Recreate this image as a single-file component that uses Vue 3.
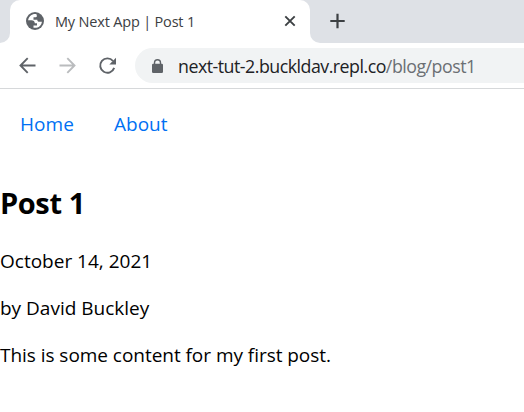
<script setup>
const navLinks = ['Home', 'About']
const paragraphs = [
  { text: 'October 14, 2021', name: 'date' },
  { text: 'by David Buckley', name: 'author' },
  { text: 'This is some content for my first post.', name: 'content' },
]
</script>

<template>
  <div class="window">
    <div class="tabs">
      <div class="before"></div>
      <div class="tab">
        <svg class="globe" width="18" height="18" viewBox="0 0 18 18">
          <circle cx="9" cy="9" r="9" fill="#5f6368" />
          <path fill="#fff" d="M10.500 2.200C6.300 1.500 2.700 4.200 2.100 8.300H5.500c2 0 3.300 1 3.300 2.900H11v2.200H7.500v2.300c4.200.9 8-1.900 8.400-6h-2.600c-1.300 0-2-.6-2-2H7.500V5.300h2.200c.8 0 1.200-.5 1.200-1.200z" />
        </svg>
        <span class="tab-title"><span>My Next App | Post 1</span></span>
        <svg class="close" width="12" height="12" viewBox="0 0 12 12"><path d="M1.300 1.300 10.700 10.700M10.700 1.300 1.300 10.700" stroke="#3c4043" stroke-width="1.900" /></svg>
      </div>
      <div class="after">
        <svg width="16" height="16" viewBox="0 0 16 16"><path d="M8.500 .8v14.400M1.300 8h14.400" stroke="#3c4043" stroke-width="2.200" /></svg>
      </div>
    </div>
    <div class="toolbar">
      <svg width="18" height="18" viewBox="0 0 18 18"><path d="M17.500 8.500H3M9.700 1.200 2.500 8.500l7.200 7.300" fill="none" stroke="#5f6368" stroke-width="1.900" /></svg>
      <svg width="18" height="18" viewBox="0 0 18 18"><path d="M1.500 8.500H16M9.300 1.200 16.500 8.500l-7.200 7.300" fill="none" stroke="#babcbe" stroke-width="1.900" /></svg>
      <svg width="18" height="18" viewBox="0 0 18 18">
        <path d="M15 4A7.200 7.200 0 1 0 16.200 10.900" fill="none" stroke="#5f6368" stroke-width="1.900" />
        <path d="M18 .7v6.700h-6.700z" fill="#5f6368" />
      </svg>
      <div class="address">
        <svg width="11" height="14" viewBox="0 0 11 14">
          <rect y="4.800" width="11" height="9.200" rx="1.200" fill="#5f6368" />
          <path d="M2.500 5.500V3.700a3 3 0 0 1 6 0v1.800" fill="none" stroke="#5f6368" stroke-width="1.400" />
        </svg>
        <span class="url">next-tut-2.buckldav.repl.co<span class="path">/blog/post1</span></span>
      </div>
    </div>
    <nav>
      <a v-for="link in navLinks" :key="link" :class="link.toLowerCase()">{{ link }}</a>
    </nav>
    <main>
      <h1>Post 1</h1>
      <p v-for="p in paragraphs" :key="p.name" :class="p.name">{{ p.text }}</p>
    </main>
  </div>
</template>

<style>
body { margin: 0; background: #fff; }
</style>

<style scoped>
.window {
  width: 524px;
  height: 412px;
  overflow: hidden;
  background: #fff;
  color: #000;
  font-family: "Open Sans", "Noto Sans", sans-serif;
  white-space: nowrap;
}
svg { display: block; flex: none; }
.tabs { display: flex; height: 43px; background: linear-gradient(#dee1e6 0 0) 0 0 / 20px 20px no-repeat, linear-gradient(#dee1e6 0 0) 300px 0 / 224px 20px no-repeat; }
.before { width: 10px; background: #dee1e6; border-bottom-right-radius: 10px; }
.tab {
  display: flex;
  align-items: center;
  box-sizing: border-box;
  width: 300px;
  height: 43px;
  padding: 0 14px 1px 16px;
  background: #fff;
  border-radius: 10px 10px 0 0;
}
.tab-title { flex: 1; margin-left: 11px; font-size: 14.500px; letter-spacing: -0.180px; color: #3c4043; }
.after { flex: 1; padding: 13px 0 0 19px; background: #dee1e6; border-bottom-left-radius: 10px; }
.toolbar {
  display: flex;
  align-items: center;
  gap: 22px;
  box-sizing: border-box;
  height: 46px;
  padding-left: 18px;
  border-bottom: 1px solid #d6d8da;
}
.address {
  display: flex;
  align-items: center;
  flex: 1;
  box-sizing: border-box;
  height: 35px;
  margin-left: -3px;
  padding-left: 17px;
  background: #f1f3f4;
  border-radius: 18px 0 0 18px;
}
.url { margin-left: 15px; font-size: 17.800px; letter-spacing: -0.500px; color: #202124; }
.path { color: #6b6f73; }
nav { display: flex; gap: 40px; padding: 21px 20px 0; font-size: 19px; line-height: 28px; letter-spacing: 0.050px; color: #0070f3; }
main { font-size: 19px; line-height: 27px; }
h1 { margin: 45px 0 26px; font-size: 29px; line-height: 39px; font-weight: 700; letter-spacing: -0.400px; }
p { margin: 0 0 20px; }
.content { letter-spacing: -0.040px; }
</style>
